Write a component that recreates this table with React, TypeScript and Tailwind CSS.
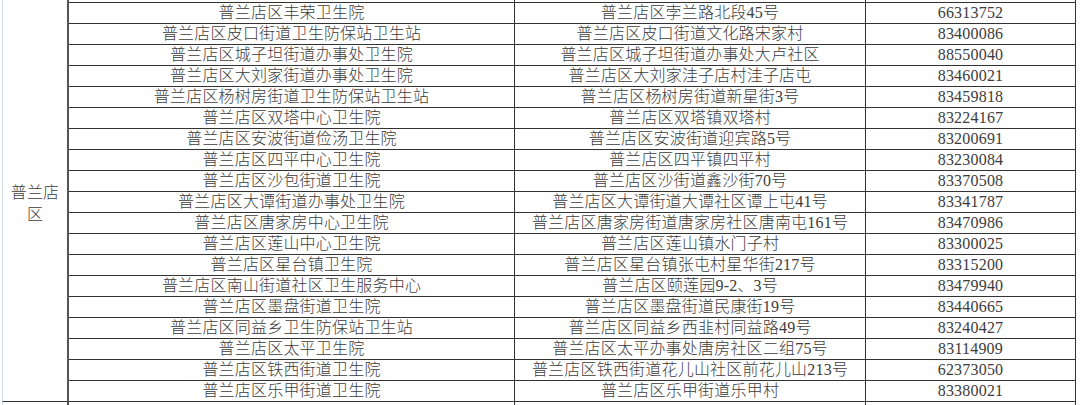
import React from "react";

const rows: [string, string, string][] = [
  ["普兰店区丰荣卫生院", "普兰店区孛兰路北段45号", "66313752"],
  ["普兰店区皮口街道卫生防保站卫生站", "普兰店区皮口街道文化路宋家村", "83400086"],
  ["普兰店区城子坦街道办事处卫生院", "普兰店区城子坦街道办事处大卢社区", "88550040"],
  ["普兰店区大刘家街道办事处卫生院", "普兰店区大刘家洼子店村洼子店屯", "83460021"],
  ["普兰店区杨树房街道卫生防保站卫生站", "普兰店区杨树房街道新星街3号", "83459818"],
  ["普兰店区双塔中心卫生院", "普兰店区双塔镇双塔村", "83224167"],
  ["普兰店区安波街道俭汤卫生院", "普兰店区安波街道迎宾路5号", "83200691"],
  ["普兰店区四平中心卫生院", "普兰店区四平镇四平村", "83230084"],
  ["普兰店区沙包街道卫生院", "普兰店区沙街道鑫沙街70号", "83370508"],
  ["普兰店区大谭街道办事处卫生院", "普兰店区大谭街道大谭社区谭上屯41号", "83341787"],
  ["普兰店区唐家房中心卫生院", "普兰店区唐家房街道唐家房社区唐南屯161号", "83470986"],
  ["普兰店区莲山中心卫生院", "普兰店区莲山镇水门子村", "83300025"],
  ["普兰店区星台镇卫生院", "普兰店区星台镇张屯村星华街217号", "83315200"],
  ["普兰店区南山街道社区卫生服务中心", "普兰店区颐莲园9-2、3号", "83479940"],
  ["普兰店区墨盘街道卫生院", "普兰店区墨盘街道民康街19号", "83440665"],
  ["普兰店区同益乡卫生防保站卫生站", "普兰店区同益乡西韭村同益路49号", "83240427"],
  ["普兰店区太平卫生院", "普兰店区太平办事处唐房社区二组75号", "83114909"],
  ["普兰店区铁西街道卫生院", "普兰店区铁西街道花儿山社区前花儿山213号", "62373050"],
  ["普兰店区乐甲街道卫生院", "普兰店区乐甲街道乐甲村", "83380021"],
];

const font = {
  fontFamily: '"Liberation Serif", "Noto Sans CJK SC", serif',
};

export default function App() {
  return (
    <div
      className="w-[1080px] h-[405px] overflow-hidden bg-white text-[#3c3c3c] text-[16px] tracking-[0.2px]"
      style={font}
    >
      <div className="flex">
        {/* merged first column */}
        <div className="w-[69px] shrink-0 flex flex-col">
          <div className="ml-[2px] border-l border-[#d4dbe6] border-r-2 border-r-[#555] h-[401px] flex items-center justify-center pt-[6px]">
            <div className="text-center leading-[22px] font-light">
              普兰店
              <br />
              区
            </div>
          </div>
          <div className="ml-[2px] border-t border-[#333] border-l border-l-[#d4dbe6] border-r-2 border-r-[#555] h-[4px]" />
        </div>
        {/* data columns */}
        <div className="flex flex-col w-[1007px]">
          <div className="grid grid-cols-[446px_351px_210px] h-[2px]">
            <div className="border-r border-[#333]" />
            <div className="border-r border-[#333]" />
            <div className="border-r border-[#333]" />
          </div>
          {rows.map((r, i) => (
            <div
              key={i}
              className="grid grid-cols-[446px_351px_210px] h-[21px] border-t border-[#333]"
            >
              <div className="border-r border-[#333] flex items-center justify-center leading-[20px] whitespace-nowrap font-light">
                {r[0]}
              </div>
              <div className="border-r border-[#333] flex items-center justify-center leading-[20px] whitespace-nowrap font-light">
                {r[1]}
              </div>
              <div className="border-r border-[#333] flex items-center justify-center leading-[20px] whitespace-nowrap text-[16px]">
                {r[2]}
              </div>
            </div>
          ))}
          <div className="grid grid-cols-[446px_351px_210px] h-[4px] border-t border-[#333]">
            <div className="border-r border-[#333]" />
            <div className="border-r border-[#333]" />
            <div className="border-r border-[#333]" />
          </div>
        </div>
      </div>
    </div>
  );
}
